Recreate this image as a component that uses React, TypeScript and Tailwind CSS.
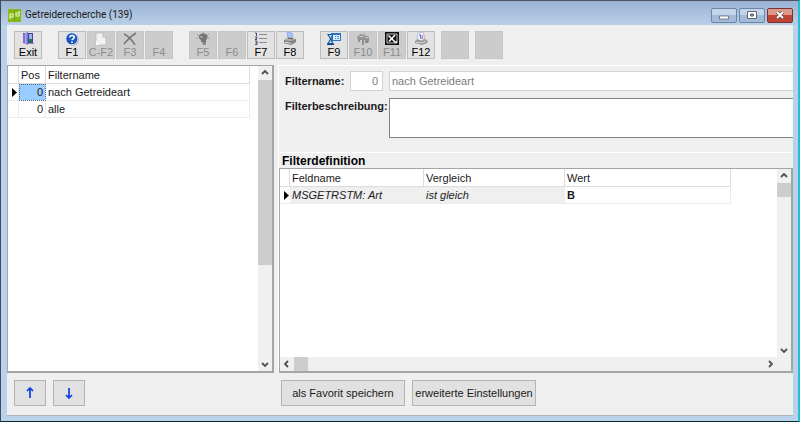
import type { ReactNode } from 'react';
import clsx from 'clsx';

type Tool = { label: string; icon?: ReactNode; disabled?: boolean };

const icon = 'h-[14px] w-[14px]';

const ExitIcon = () => (
  <svg viewBox="0 0 14 14" className={icon}>
    <path d="M2 1h10v10H2z" fill="#4a3f9e" />
    <path d="M8 2h3v5H8z" fill="#8fb6ee" />
    <path d="M8 7h3v3H8z" fill="#1d7a45" />
    <path d="M2 2l5-2v13l-5-2z" fill="#7d74cf" />
    <path d="M4 1h1.500v11H4z" fill="#b0a8ea" />
    <path d="M7 11h6v1H7z" fill="#8d8d96" />
  </svg>
);

const HelpIcon = () => (
  <svg viewBox="0 0 14 14" className={icon}>
    <circle cx="7.8" cy="7.6" r="6" fill="#9aa3b5" />
    <circle cx="6.8" cy="6.8" r="6" fill="#1d56bd" stroke="#e8effa" strokeWidth=".8" />
    <path d="M4.800 5.500c0-2.800 4.400-2.600 4.400 0C9.200 7 7 6.800 7 8.300" fill="none" stroke="#fff" strokeWidth="1.600" />
    <path d="M6.200 9.500h1.600V11H6.200z" fill="#fff" />
  </svg>
);

const NewIcon = () => (
  <svg viewBox="0 0 14 14" className={icon}>
    <path d="M2 1h7l3 4v8H2z" fill="#f1f1f1" stroke="#b5b5b5" strokeWidth=".7" />
    <path d="M9 1v4h3" fill="#dcdcdc" stroke="#a8a8a8" strokeWidth=".7" />
    <path d="M2 9l3 4H2z" fill="#fff" />
  </svg>
);

const DeleteIcon = () => (
  <svg viewBox="0 0 14 14" className={icon}>
    <path d="M1 2c4 2 8 6 11 11M13 1C8 4 4 8 1 12" fill="none" stroke="#777" strokeWidth="1.500" />
  </svg>
);

const BulbIcon = () => (
  <svg viewBox="0 0 14 14" className={icon}>
    <path d="M1 2l2 2M13 2l-2 2M7 0v2M0 6h2M12 6h2" stroke="#a2a2a2" />
    <path d="M7 1.500c5.500 0 5.500 4.500 3 6.500v2H5V8C1.500 6 2.500 1.500 7 1.500z" fill="#747474" />
    <path d="M4.500 4h2v2h-2z" fill="#aaa" />
    <path d="M6 10h4v3H7z" fill="#8c8c8c" />
  </svg>
);

const ListIcon = () => (
  <svg viewBox="0 0 14 14" className={icon}>
    <path d="M5 2.500h8M5 6.500h8M5 10.500h8" stroke="#8a8a8a" />
    <path d="M1 1h1.500v3M1 5h2v1L1 7.500h2M1 9h2v3.500H1M1.500 10.700H3" fill="none" stroke="#3a3a6e" strokeWidth=".9" />
  </svg>
);

const PrinterIcon = () => (
  <svg viewBox="0 0 14 14" className={icon}>
    <path d="M4 0l5 1 1 5-5 1z" fill="#a9c4f7" stroke="#7898e8" strokeWidth=".6" />
    <path d="M1 8l4-3 8 2v3l-5 3-7-2z" fill="#b3b3b3" />
    <path d="M1 8l7 1 5-2v3l-5 3-7-2z" fill="#858585" />
    <path d="M2 10l6 1.500" stroke="#e3e3e3" />
    <path d="M5 6l5 1" stroke="#555" />
  </svg>
);

const WaitIcon = () => (
  <svg viewBox="0 0 14 14" className={icon}>
    <path d="M4 1h10v8H4z" fill="#2878c8" />
    <path d="M6 3h7v5H6z" fill="#d9edff" />
    <path d="M8 4h1v1H8zM10 4h2v1h-2zM8 6h1v1H8zM10 6h2v1h-2z" fill="#5090d0" />
    <path d="M0 2h6L4 7l3 5H0l3-5z" fill="#1c5798" />
    <path d="M2 3h3L3.500 6zM3.500 8L5 11H2z" fill="#b2dcff" />
    <path d="M0 12.500h7" stroke="#173f70" />
  </svg>
);

const MachineIcon = () => (
  <svg viewBox="0 0 14 14" className={icon}>
    <path d="M1 5l3-3 5 1 4 2v5l-4 1V8L2 8z" fill="#929292" />
    <path d="M3 4l4 1M9 5l3 1" stroke="#d2d2d2" />
    <path d="M3 8v2M7 8v5M11 9v2" stroke="#7d7d7d" strokeWidth="1.500" />
    <path d="M8 1v4" stroke="#aaa" />
  </svg>
);

const ExcelIcon = () => (
  <svg viewBox="0 0 14 14" className={icon}>
    <path d="M0 0h14v13H0z" fill="#111" />
    <path d="M2 2h10v9H2z" fill="none" stroke="#eee" strokeWidth=".8" />
    <path d="M3.500 3.500l6 6M10 3L4 9.500" stroke="#fff" strokeWidth="1.500" />
    <path d="M9 9h3v2H9z" fill="#ddd" />
  </svg>
);

const OutputIcon = () => (
  <svg viewBox="0 0 14 14" className={icon}>
    <path d="M3 8l1-7 5-1 2 7-5 2z" fill="#f5f7ff" stroke="#9c9cb6" strokeWidth=".6" />
    <path d="M6 2l1 5" stroke="#5275e8" strokeWidth="1.300" />
    <path d="M8 3l1 4" stroke="#d46860" />
    <path d="M1 9l3-2 3 2 4-2 3 2-1 2-5 2-7-2z" fill="#959595" />
    <path d="M2 10l6 1 4-2" fill="none" stroke="#ddd" />
  </svg>
);

const toolGroups: Tool[][] = [
  [{ label: 'Exit', icon: <ExitIcon /> }],
  [
    { label: 'F1', icon: <HelpIcon /> },
    { label: 'C-F2', icon: <NewIcon />, disabled: true },
    { label: 'F3', icon: <DeleteIcon />, disabled: true },
    { label: 'F4', disabled: true },
  ],
  [
    { label: 'F5', icon: <BulbIcon />, disabled: true },
    { label: 'F6', disabled: true },
    { label: 'F7', icon: <ListIcon /> },
    { label: 'F8', icon: <PrinterIcon /> },
  ],
  [
    { label: 'F9', icon: <WaitIcon /> },
    { label: 'F10', icon: <MachineIcon />, disabled: true },
    { label: 'F11', icon: <ExcelIcon />, disabled: true },
    { label: 'F12', icon: <OutputIcon /> },
  ],
];

const filters = [
  { pos: 0, name: 'nach Getreideart' },
  { pos: 0, name: 'alle' },
];

const ToolButton = ({ label, icon: image, disabled }: Tool) => (
  <button
    type="button"
    disabled={disabled}
    className={clsx(
      'flex h-7 w-7 flex-col items-center border text-[11px] leading-3',
      disabled ? 'border-[#c6c6c6] bg-[#cccccc] text-[#8c8c8c]' : 'border-[#bcbcbc] bg-[#e2e2e2] text-black'
    )}
  >
    <span className="flex h-[14px] shrink-0 items-center">{image}</span>
    {label}
  </button>
);

const arrows = {
  up: 'M2 6l3-3 3 3',
  down: 'M2 4l3 3 3-3',
  left: 'M6 2L3 5l3 3',
  right: 'M4 2l3 3-3 3',
};

const ScrollArrow = ({ direction, label }: { direction: keyof typeof arrows; label: string }) => (
  <button type="button" aria-label={label} className="flex h-[14px] w-[14px] shrink-0 items-center justify-center">
    <svg viewBox="0 0 10 10" className="h-[10px] w-[10px]">
      <path d={arrows[direction]} fill="none" stroke="#505050" strokeWidth="1.800" />
    </svg>
  </button>
);

const RowMarker = () => (
  <svg viewBox="0 0 5 9" className="ml-1 h-[9px] w-[5px]">
    <path d="M0 0l5 4.500L0 9z" fill="#000" />
  </svg>
);

const captionButton =
  'flex h-[15px] w-[26px] items-center justify-center rounded-xs border border-[#6c86a8] bg-linear-to-b from-[#c3d5e9] from-50% to-[#a2bbd8] to-50%';
const footerButton = 'h-[26px] border border-[#b3b3b3] bg-[#e1e1e1] text-center text-[11px]';

export default function App() {
  return (
    <div className="flex min-h-screen flex-col border-t border-r-2 border-b border-l border-t-[#4b5563] border-r-[#25bfd2] border-b-[#052a30] border-l-[#3f4b59] bg-[#b9d1ea] font-['Liberation_Sans',Arial,sans-serif] text-[11px] leading-4 text-[#1a1a1a]">
      <header className="flex h-6 items-center bg-linear-to-b from-[#9ab3d2] to-[#b9cfe8] pt-1 pr-[5px] pl-[7px]">
        <svg viewBox="0 0 13 13" className="h-[13px] w-[13px]">
          <path d="M0 0h13v13H0z" fill="#86b817" />
          <path d="M2 10V5h3v3H2M11 2v5H8V4h3" fill="none" stroke="#e8f5b8" strokeWidth="1.200" />
          <path d="M6.500 1v11" stroke="#5f8b12" strokeWidth=".6" />
        </svg>
        <h1 className="ml-1 flex-1 font-[Roboto,'Noto_Sans',sans-serif] text-[10px]">Getreiderecherche (139)</h1>
        <div className="flex gap-0.5">
          <button type="button" aria-label="Minimieren" className={captionButton}>
            <svg viewBox="0 0 10 5" className="mt-1 h-[5px] w-[10px]">
              <path d="M.5 1h9v3h-9z" fill="#fff" stroke="#667" strokeWidth=".8" />
            </svg>
          </button>
          <button type="button" aria-label="Maximieren" className={captionButton}>
            <svg viewBox="0 0 10 8" className="h-2 w-[10px]">
              <path d="M.5.500h9v7h-9z" fill="#fff" stroke="#556" strokeWidth=".9" />
              <path d="M3.500 3h3v2h-3z" fill="#8fa8c4" stroke="#556" strokeWidth=".9" />
            </svg>
          </button>
          <button
            type="button"
            aria-label="Schließen"
            className="flex h-[15px] w-[26px] items-center justify-center rounded-xs border border-[#7a3238] bg-linear-to-b from-[#dd9a8b] from-50% to-[#bd4433] to-50%"
          >
            <svg viewBox="0 0 10 8" className="h-2 w-[10px]">
              <path d="M2 1l6 6M8 1L2 7" stroke="#5c4a50" strokeWidth="3.200" />
              <path d="M2 1l6 6M8 1L2 7" stroke="#fff" strokeWidth="1.800" />
            </svg>
          </button>
        </div>
      </header>

      <div className="mr-[5px] mb-[5px] ml-1.5 flex flex-1 flex-col border-b border-[#b0b4ba] bg-[#efefef]">
        <nav className="flex h-10 items-start gap-4 px-[7px] pt-1.5">
          {toolGroups.map((group) => (
            <div key={group[0].label} className="flex gap-px">
              {group.map((tool) => (
                <ToolButton key={tool.label} {...tool} />
              ))}
            </div>
          ))}
          <div className="-ml-2.5 flex gap-1.5">
            <ToolButton label="" disabled />
            <ToolButton label="" disabled />
          </div>
        </nav>

        <main className="flex min-h-[307px] flex-1 gap-1">
          <section className="flex w-[267px] shrink-0 border-t border-r-2 border-b-2 border-l border-[#a5a5a5] bg-white">
            <div className="flex-1">
              <table className="w-[242px] table-fixed border-separate border-spacing-0">
                <colgroup>
                  <col className="w-[11px]" />
                  <col className="w-[27px]" />
                  <col />
                </colgroup>
                <thead>
                  <tr className="h-[18px] text-left [&>th]:border-r [&>th]:border-b [&>th]:border-[#dcdcdc] [&>th]:p-0 [&>th]:font-normal">
                    <th aria-label="Markierung" />
                    <th><span className="ml-0.5">Pos</span></th>
                    <th><span className="ml-0.5">Filtername</span></th>
                  </tr>
                </thead>
                <tbody>
                  {filters.map((filter, index) => (
                    <tr key={filter.name} className="h-[17px] [&>td]:border-r [&>td]:border-b [&>td]:border-[#ececec] [&>td]:p-0">
                      <td>{index === 0 && <RowMarker />}</td>
                      <td className={clsx('text-right', index === 0 && 'bg-[#99ccff] outline-1 -outline-offset-1 outline-dotted outline-[#46688c]')}>
                        <span className="mr-0.5">{filter.pos}</span>
                      </td>
                      <td><span className="ml-0.5">{filter.name}</span></td>
                    </tr>
                  ))}
                </tbody>
              </table>
            </div>
            <div className="flex w-[14px] flex-col bg-[#f0f0f0]">
              <ScrollArrow direction="up" label="Nach oben" />
              <div className="flex-1">
                <div className="h-2/3 bg-[#cdcdcd]" />
              </div>
              <ScrollArrow direction="down" label="Nach unten" />
            </div>
          </section>

          <section className="flex min-w-0 flex-1 flex-col border-t border-l border-white">
            <form className="flex h-[86px] shrink-0 flex-col gap-[7px] pt-[5px]">
              <div className="flex items-center">
                <label htmlFor="filter-name" className="ml-1.5 w-[65px] font-bold">Filtername:</label>
                <input
                  aria-label="Filterposition"
                  defaultValue="0"
                  disabled
                  className="mr-1.5 h-5 w-[33px] border border-[#d2d2d2] bg-white pr-1 text-right text-[#7c7c7c]"
                />
                <input
                  id="filter-name"
                  defaultValue="nach Getreideart"
                  disabled
                  className="h-5 min-w-0 flex-1 border border-r-0 border-[#d2d2d2] bg-white pl-0.5 text-[#7c7c7c]"
                />
              </div>
              <div className="flex items-start">
                <label htmlFor="filter-text" className="ml-1.5 w-[104px] font-bold">Filterbeschreibung:</label>
                <textarea id="filter-text" className="h-10 min-w-0 flex-1 resize-none border border-r-0 border-[#828282] bg-white" />
              </div>
            </form>

            <div className="flex flex-1 flex-col border-t border-white">
              <h2 className="h-[15px] pl-[3px] text-[12px] font-bold text-black">Filterdefinition</h2>
              <div className="flex flex-1 flex-col border-t border-r-2 border-b-2 border-l border-[#a5a5a5] bg-white">
                <div className="flex flex-1">
                  <div className="flex-1">
                    <table className="w-[451px] table-fixed border-separate border-spacing-0">
                      <colgroup>
                        <col className="w-[10px]" />
                        <col className="w-[134px]" />
                        <col className="w-[141px]" />
                        <col />
                      </colgroup>
                      <thead>
                        <tr className="h-[18px] text-left [&>th]:border-r [&>th]:border-b [&>th]:border-[#dcdcdc] [&>th]:p-0 [&>th]:font-normal">
                          <th aria-label="Markierung" />
                          <th><span className="ml-0.5">Feldname</span></th>
                          <th><span className="ml-0.5">Vergleich</span></th>
                          <th><span className="ml-0.5">Wert</span></th>
                        </tr>
                      </thead>
                      <tbody>
                        <tr className="h-[17px] [&>td]:border-b [&>td]:border-[#ececec] [&>td]:p-0">
                          <td><RowMarker /></td>
                          <td className="bg-[#efefef] italic"><span className="ml-0.5">MSGETRSTM: Art</span></td>
                          <td className="bg-[#efefef] italic"><span className="ml-0.5">ist gleich</span></td>
                          <td className="border-r font-bold"><span className="ml-0.5">B</span></td>
                        </tr>
                      </tbody>
                    </table>
                  </div>
                  <div className="flex w-[14px] flex-col bg-[#f0f0f0]">
                    <ScrollArrow direction="up" label="Nach oben" />
                    <div className="h-[14px] bg-[#cdcdcd]" />
                    <div className="flex-1" />
                    <ScrollArrow direction="down" label="Nach unten" />
                  </div>
                </div>
                <div className="flex h-[14px] bg-[#f0f0f0] pr-[14px]">
                  <ScrollArrow direction="left" label="Nach links" />
                  <div className="w-[14px] bg-[#cdcdcd]" />
                  <div className="flex-1" />
                  <ScrollArrow direction="right" label="Nach rechts" />
                </div>
              </div>
            </div>
          </section>
        </main>

        <footer className="flex h-[42px] shrink-0 items-start pt-[7px] pl-[7px]">
          <div className="flex w-[267px] gap-[7px]">
            <button type="button" aria-label="Filter nach oben" className={clsx(footerButton, 'flex w-8 items-center justify-center')}>
              <svg viewBox="0 0 8 12" className="h-3 w-2">
                <path d="M4 11V1M1 4l3-3 3 3" fill="none" stroke="#0c3fe0" strokeWidth="1.700" />
              </svg>
            </button>
            <button type="button" aria-label="Filter nach unten" className={clsx(footerButton, 'flex w-8 items-center justify-center')}>
              <svg viewBox="0 0 8 12" className="h-3 w-2">
                <path d="M4 1v10M1 8l3 3 3-3" fill="none" stroke="#0c3fe0" strokeWidth="1.700" />
              </svg>
            </button>
          </div>
          <div className="flex gap-[7px]">
            <button type="button" className={clsx(footerButton, 'w-[124px]')}>als Favorit speichern</button>
            <button type="button" className={clsx(footerButton, 'w-[124px]')}>erweiterte Einstellungen</button>
          </div>
        </footer>
      </div>
    </div>
  );
}
